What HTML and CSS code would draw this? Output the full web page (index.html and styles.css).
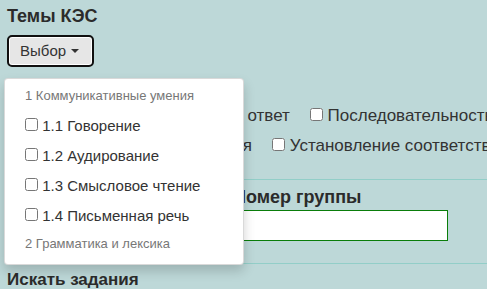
FILE: index.html
```html
<!DOCTYPE html>
<html lang="ru">
<head>
<meta charset="utf-8">
<title>Поиск заданий</title>
<link rel="stylesheet" href="styles.css">
</head>
<body>
<div class="page">
  <h2 class="title">Темы КЭС</h2>
  <div class="dropdown">
    <button class="btn" type="button"><span>Выбор</span><span class="caret"></span></button>
    <div class="menu">
      <div class="menu-header">1 Коммуникативные умения</div>
      <label class="menu-item"><input type="checkbox"> 1.1 Говорение</label>
      <label class="menu-item"><input type="checkbox"> 1.2 Аудирование</label>
      <label class="menu-item"><input type="checkbox"> 1.3 Смысловое чтение</label>
      <label class="menu-item"><input type="checkbox"> 1.4 Письменная речь</label>
      <div class="menu-header menu-header-last">2 Грамматика и лексика</div>
    </div>
  </div>

  <h2 class="title types">Типы заданий</h2>
  <div class="check-row">
    <label class="check"><input type="checkbox"> Выбор ответов</label>
    <label class="check"><input type="checkbox"> Краткий ответ</label>
    <label class="check"><input type="checkbox"> Последовательность</label>
  </div>
  <div class="check-row">
    <label class="check"><input type="checkbox"> Пропуск</label>
    <label class="check"><input type="checkbox"> Классификация</label>
    <label class="check"><input type="checkbox"> Установление соответствия</label>
  </div>

  <div class="rule"></div>

  <div class="fields">
    <div class="field">
      <label class="field-label">Класс</label>
      <input class="field-input" type="text">
    </div>
    <div class="field">
      <label class="field-label">Номер группы</label>
      <input class="field-input" type="text">
    </div>
  </div>

  <div class="rule rule-low"></div>

  <h2 class="title search">Искать задания</h2>
</div>
</body>
</html>
```

FILE: styles.css
```css
html, body {
  margin: 0;
  padding: 0;
}

body {
  background: #bdd8d8;
  font-family: "Liberation Sans", Arial, sans-serif;
  font-size: 17px;
  color: #333;
  overflow: hidden;
}

.page {
  padding: 0 0 0 7px;
}

.title {
  margin: 0;
  padding-top: 6px;
  font-size: 18px;
  line-height: 20px;
  font-weight: bold;
  color: #2b2b2b;
  white-space: nowrap;
}

.title.types {
  padding-top: 0;
  margin: 10px 0 4px;
}

.title.search {
  padding-top: 0;
  margin-top: 6px;
  font-size: 17px;
}

/* dropdown */
.dropdown {
  position: relative;
  margin-top: 9px;
  height: 32px;
}

.btn {
  display: inline-flex;
  align-items: center;
  gap: 5px;
  box-sizing: border-box;
  height: 32px;
  padding: 0 13px 0 11px;
  margin: 0;
  border: 2px solid #101010;
  border-radius: 5px;
  box-shadow: inset 0 0 0 1px #fff;
  background: #e6e6e6;
  font-family: inherit;
  font-size: 15px;
  line-height: 20px;
  color: #333;
}

.caret {
  width: 0;
  height: 0;
  border-top: 4px solid #333;
  border-left: 4px solid transparent;
  border-right: 4px solid transparent;
}

.menu {
  position: absolute;
  left: -3px;
  top: 43px;
  z-index: 10;
  box-sizing: border-box;
  width: 240px;
  padding: 5px 0;
  background: #fff;
  border: 1px solid rgba(0, 0, 0, 0.15);
  border-radius: 4px;
  box-shadow: 0 6px 12px rgba(0, 0, 0, 0.175);
}

.menu-header {
  padding: 3px 20px;
  font-size: 13px;
  line-height: 17px;
  color: #777;
  white-space: nowrap;
}

.menu-header-last {
  padding: 8px 20px 7px;
}

.menu-item {
  display: block;
  padding: 9px 20px 1px;
  font-size: 15px;
  line-height: 20px;
  color: #333;
  white-space: nowrap;
}

.menu-item input {
  margin: 0 0 2px 0;
  vertical-align: baseline;
}

/* task type checkboxes */
.check-row {
  display: flex;
  gap: 20px;
  height: 30px;
  line-height: 30px;
  white-space: nowrap;
}

.check input {
  margin: 0;
  vertical-align: baseline;
}

.rule {
  height: 1px;
  margin-top: 18px;
  background: #92cec8;
}

.rule.rule-low {
  margin-top: 22px;
}

.fields {
  display: grid;
  grid-template-columns: 211px 215px;
  column-gap: 15px;
  margin-top: 7px;
}

.field {
  display: flex;
  flex-direction: column;
  gap: 3px;
}

.field-label {
  font-size: 18px;
  font-weight: bold;
  line-height: 20px;
  color: #2b2b2b;
  white-space: nowrap;
}

.field-input {
  box-sizing: border-box;
  width: 100%;
  height: 31px;
  margin: 0;
  border: 1px solid #0a7d0a;
  background: #fff;
}
```
